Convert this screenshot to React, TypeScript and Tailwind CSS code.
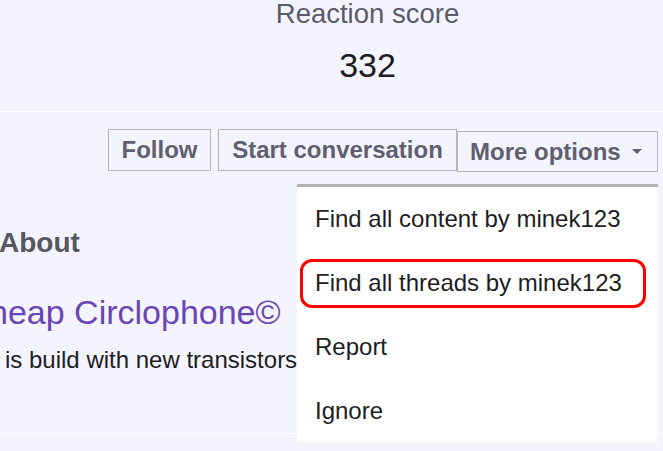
import React from 'react';

const menuItems = [
  { label: 'Find all content by minek123', marked: false },
  { label: 'Find all threads by minek123', marked: true },
  { label: 'Report', marked: false },
  { label: 'Ignore', marked: false },
];

const ProfileActions = () => {
  return (
    <div className="flex justify-end pr-[5px] pt-[17px]">
      <button className="h-[42px] w-[103px] border border-[#b5b5bc] text-[24px] font-bold leading-[28px] text-[#5f5f70]">
        Follow
      </button>
      <button className="ml-[7px] h-[42px] w-[239px] border border-[#b5b5bc] text-[24px] font-bold leading-[28px] text-[#5f5f70]">
        Start conversation
      </button>
      <button className="mt-[2px] flex h-[41px] w-[201px] items-center border border-[#b5b5bc] pl-[12px] text-[24px] font-bold leading-[28px] text-[#5f5f70]">
        <span>More options</span>
        <svg width="10" height="5" viewBox="0 0 10 5" className="ml-[11px]">
          <polygon points="0,0 10,0 5,5" fill="#5f5f70" />
        </svg>
      </button>
    </div>
  );
};

const MoreOptionsMenu = () => {
  return (
    <div className="absolute right-[5px] top-[184px] z-10 h-[258px] w-[361px] border-t-[3px] border-[#b3b3b3] bg-white">
      {menuItems.map((item) => (
        <div key={item.label} className="relative flex h-[64px] items-center pl-[18px] text-[24px] leading-[28px] text-[#1d1d22]">
          {item.marked && (
            <div className="absolute bottom-[7px] left-[3px] right-[12px] top-[8px] rounded-[12px] border-[3px] border-[#ff0000]"></div>
          )}
          <span className="relative">{item.label}</span>
        </div>
      ))}
    </div>
  );
};

const App = () => {
  return (
    <div className="relative h-[451px] w-[663px] overflow-hidden bg-[#f4f4fe] font-['Liberation_Sans',Arial,sans-serif]">
      <div className="flex h-[111px] flex-col items-center pl-[72px]">
        <div className="text-[27.5px] leading-[28px] text-[#5b5b68]">Reaction score</div>
        <div className="mt-[17px] text-[34px] leading-[40px] text-[#1c1c22]">332</div>
      </div>
      <div className="h-px bg-white"></div>

      <ProfileActions />

      <div className="flex flex-col">
        <h3 className="mt-[56px] ml-[-1px] text-[28px] font-bold leading-[30px] text-[#57575f]">About</h3>
        <div className="mt-[36px] ml-[-28px] whitespace-nowrap text-[34px] leading-[36px] text-[#6a45b5]">cheap Circlophone©</div>
        <p className="mt-[16px] ml-[-15px] whitespace-nowrap text-[24px] leading-[28px] text-[#1d1d22]">It is build with new transistors</p>
        <div className="mt-[59px] h-px bg-white"></div>
      </div>

      <MoreOptionsMenu />
    </div>
  );
};

export default App;
